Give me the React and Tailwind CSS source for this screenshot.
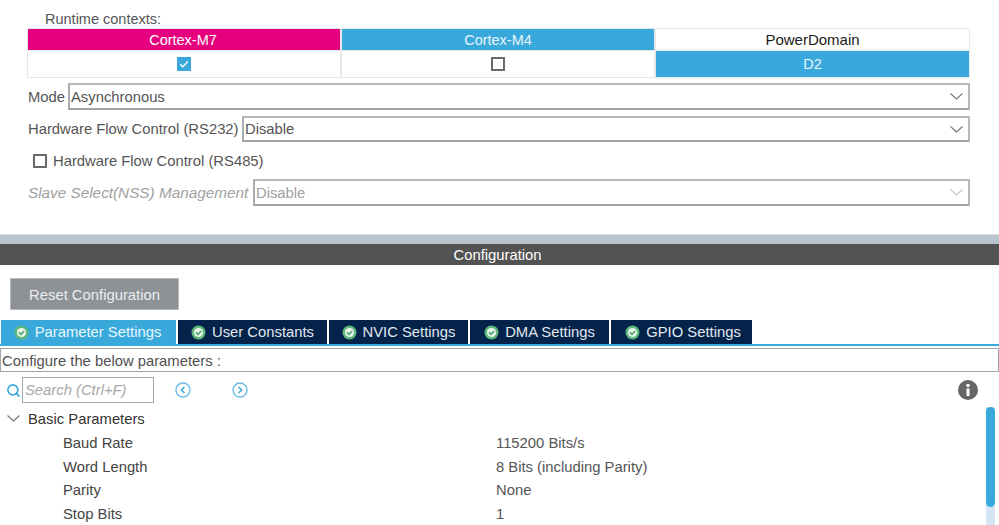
import React from "react";
import { Search } from "lucide-react";

const tabs = [
  { label: "Parameter Settings", width: "w-[175px]", active: true, offset: "pr-[2px]" },
  { label: "User Constants", width: "w-[149px]", offset: "" },
  { label: "NVIC Settings", width: "w-[139px]", offset: "" },
  { label: "DMA Settings", width: "w-[139px]", offset: "" },
  { label: "GPIO Settings", width: "w-[141px]", offset: "pl-[3px]" },
];

const params = [
  { name: "Baud Rate", value: "115200 Bits/s" },
  { name: "Word Length", value: "8 Bits (including Parity)" },
  { name: "Parity", value: "None" },
  { name: "Stop Bits", value: "1" },
];

const Chevron = ({ className }) => (
  <svg width="13" height="7" viewBox="0 0 13 7" className={className}>
    <path d="M0.5 0.5L6.5 6L12.5 0.5" fill="none" stroke="currentColor" strokeWidth="1.2" />
  </svg>
);

const CheckBadge = () => (
  <svg width="15" height="15" viewBox="0 0 15 15" className="shrink-0">
    <circle cx="7.5" cy="7.5" r="7" fill="#5cb87a" />
    <circle cx="7.5" cy="7.5" r="4.6" fill="#e8f3ec" />
    <path d="M5 7.4l2 2 3.2-3.4" fill="none" stroke="#4aa96c" strokeWidth="1.6" />
  </svg>
);

const Select = ({ value, disabled }) => (
  <div
    className={`flex items-center justify-between flex-1 border-2 border-[#b4bac0] border-b-[#a0a4a8] border-l-[#a8adb2] pl-[1px] pr-[5px] ${
      disabled ? "text-[#a0a0a0]" : "text-[#555555]"
    }`}
  >
    <span className={disabled ? "pt-[1px]" : ""}>{value}</span>
    <Chevron className={disabled ? "text-[#c8c8c8]" : "text-[#777777]"} />
  </div>
);

const App = () => {
  return (
    <div className="w-[999px] h-[525px] overflow-hidden bg-white text-[14.8px] leading-[18px] text-[#555555] font-['Liberation_Sans',Arial,sans-serif]">
      {/* Runtime contexts */}
      <div className="h-[28px] pl-[45px] pt-[10px] text-[14.5px]">Runtime contexts:</div>
      <div className="ml-[27px] w-[943px] border border-[#e6e9ec] grid grid-cols-[312px_312px_313px] gap-x-[2px] gap-y-[1px] bg-[#e6e9ec] text-[14.5px]">
        <div className="h-[21px] flex items-center justify-center pr-[2px] bg-[#e6007e] text-white">Cortex-M7</div>
        <div className="h-[21px] flex items-center justify-center bg-[#39a9dc] text-[#e8f5fb]">Cortex-M4</div>
        <div className="h-[21px] flex items-center justify-center bg-white text-[#1a1a1a] text-[15px]">PowerDomain</div>
        <div className="h-[26px] flex items-center justify-center bg-white">
          <div className="w-[14px] h-[14px] bg-[#39a9dc] flex items-center justify-center">
            <svg width="12" height="12" viewBox="0 0 12 12">
              <path d="M2.2 6.2l2.6 2.6 5-5.4" fill="none" stroke="white" strokeWidth="1.4" />
            </svg>
          </div>
        </div>
        <div className="h-[26px] flex items-center justify-center bg-white">
          <div className="w-[14px] h-[14px] border-2 border-[#6a6a6a]" />
        </div>
        <div className="h-[26px] flex items-center justify-center bg-[#39a9dc] text-[#e8f5fb]">D2</div>
      </div>

      {/* Mode form */}
      <div className="ml-[28px] w-[942px] mt-[5px] flex flex-col">
        <div className="h-[27px] flex items-stretch">
          <span className="w-[40px] self-center">Mode</span>
          <Select value="Asynchronous" />
        </div>
        <div className="h-[26px] mt-[6px] flex items-stretch">
          <span className="w-[214px] self-center">Hardware Flow Control (RS232)</span>
          <Select value="Disable" />
        </div>
        <div className="h-[27px] mt-[5px] pl-[5px] flex items-center gap-[6px]">
          <div className="w-[14px] h-[14px] border-2 border-[#6a6a6a]" />
          <span>Hardware Flow Control (RS485)</span>
        </div>
        <div className="h-[27px] mt-[5px] flex items-stretch">
          <span className="w-[225px] self-center pt-[1px] italic text-[#a0a0a0] text-[15.3px]">Slave Select(NSS) Management</span>
          <Select value="Disable" disabled />
        </div>
      </div>

      {/* Configuration header */}
      <div className="mt-[28px] h-[10px] bg-[#b9c4cc] border-t border-[#d8dee3]" />
      <div className="h-[21px] pt-[1px] bg-[#535353] text-white flex items-center justify-center pr-[4px]">Configuration</div>

      <button className="block ml-[10px] mt-[13px] w-[169px] h-[32px] pt-[1px] bg-[#8e9297] border border-[#b4bac0] text-[#eceeef]">
        Reset Configuration
      </button>

      {/* Tabs */}
      <div className="mt-[10px] h-[24px] pl-[1px] flex gap-[2px]">
        {tabs.map((tab) => (
          <div
            key={tab.label}
            className={`${tab.width} ${tab.offset} flex items-center justify-center gap-[6px] ${
              tab.active ? "bg-[#39a9dc] text-[#e8f5fb]" : "bg-[#03234b] text-[#e4e8ee]"
            }`}
          >
            <CheckBadge />
            <span>{tab.label}</span>
          </div>
        ))}
      </div>
      <div className="h-[2px] bg-[#39a9dc]" />

      <div className="mt-[2px] h-[24px] border border-[#a0a4a8] pl-[1px] pt-[1px] flex items-center text-[#505050]">
        Configure the below parameters :
      </div>

      {/* Search row */}
      <div className="h-[26px] mt-[5px] pl-[6px] pr-[21px] flex items-center">
        <Search className="w-[15px] h-[15px] text-[#39a9dc]" strokeWidth={2.6} />
        <div className="ml-[1px] w-[132px] h-[26px] border border-[#a0a8b0] pl-[2px] flex items-center italic text-[#a8a8a8]">
          Search (Ctrl+F)
        </div>
        <svg width="16" height="16" viewBox="0 0 16 16" className="ml-[21px]">
          <circle cx="8" cy="8" r="7" fill="none" stroke="#6bbce4" strokeWidth="1.4" />
          <path d="M9.4 5L6.4 8l3 3" fill="none" stroke="#39a9dc" strokeWidth="1.5" />
        </svg>
        <svg width="16" height="16" viewBox="0 0 16 16" className="ml-[41px]">
          <circle cx="8" cy="8" r="7" fill="none" stroke="#6bbce4" strokeWidth="1.4" />
          <path d="M6.6 5l3 3-3 3" fill="none" stroke="#39a9dc" strokeWidth="1.5" />
        </svg>
        <svg width="20" height="20" viewBox="0 0 20 20" className="ml-auto">
          <circle cx="10" cy="10" r="10" fill="#666666" />
          <rect x="8.5" y="8.5" width="3" height="7.5" fill="white" />
          <rect x="8.5" y="4" width="3" height="3" fill="white" />
        </svg>
      </div>

      {/* Parameter tree */}
      <div className="relative mt-[4px]">
        <div className="h-[24px] pb-[1px] flex items-center text-[#333333]">
          <Chevron className="ml-[7px] text-[#777777]" />
          <span className="ml-[8px]">Basic Parameters</span>
        </div>
        {params.map((p) => (
          <div key={p.name} className="h-[23.7px] flex items-center text-[#444444]">
            <span className="ml-[63px] w-[433px]">{p.name}</span>
            <span className="text-[#555555]">{p.value}</span>
          </div>
        ))}
        <div className="absolute left-[986px] top-0 w-[9px] h-[130px] bg-[#d4e6f5]">
          <div className="w-[9px] h-[100px] rounded-[5px] bg-[#39a9dc]" />
        </div>
      </div>
    </div>
  );
};

export default App;
